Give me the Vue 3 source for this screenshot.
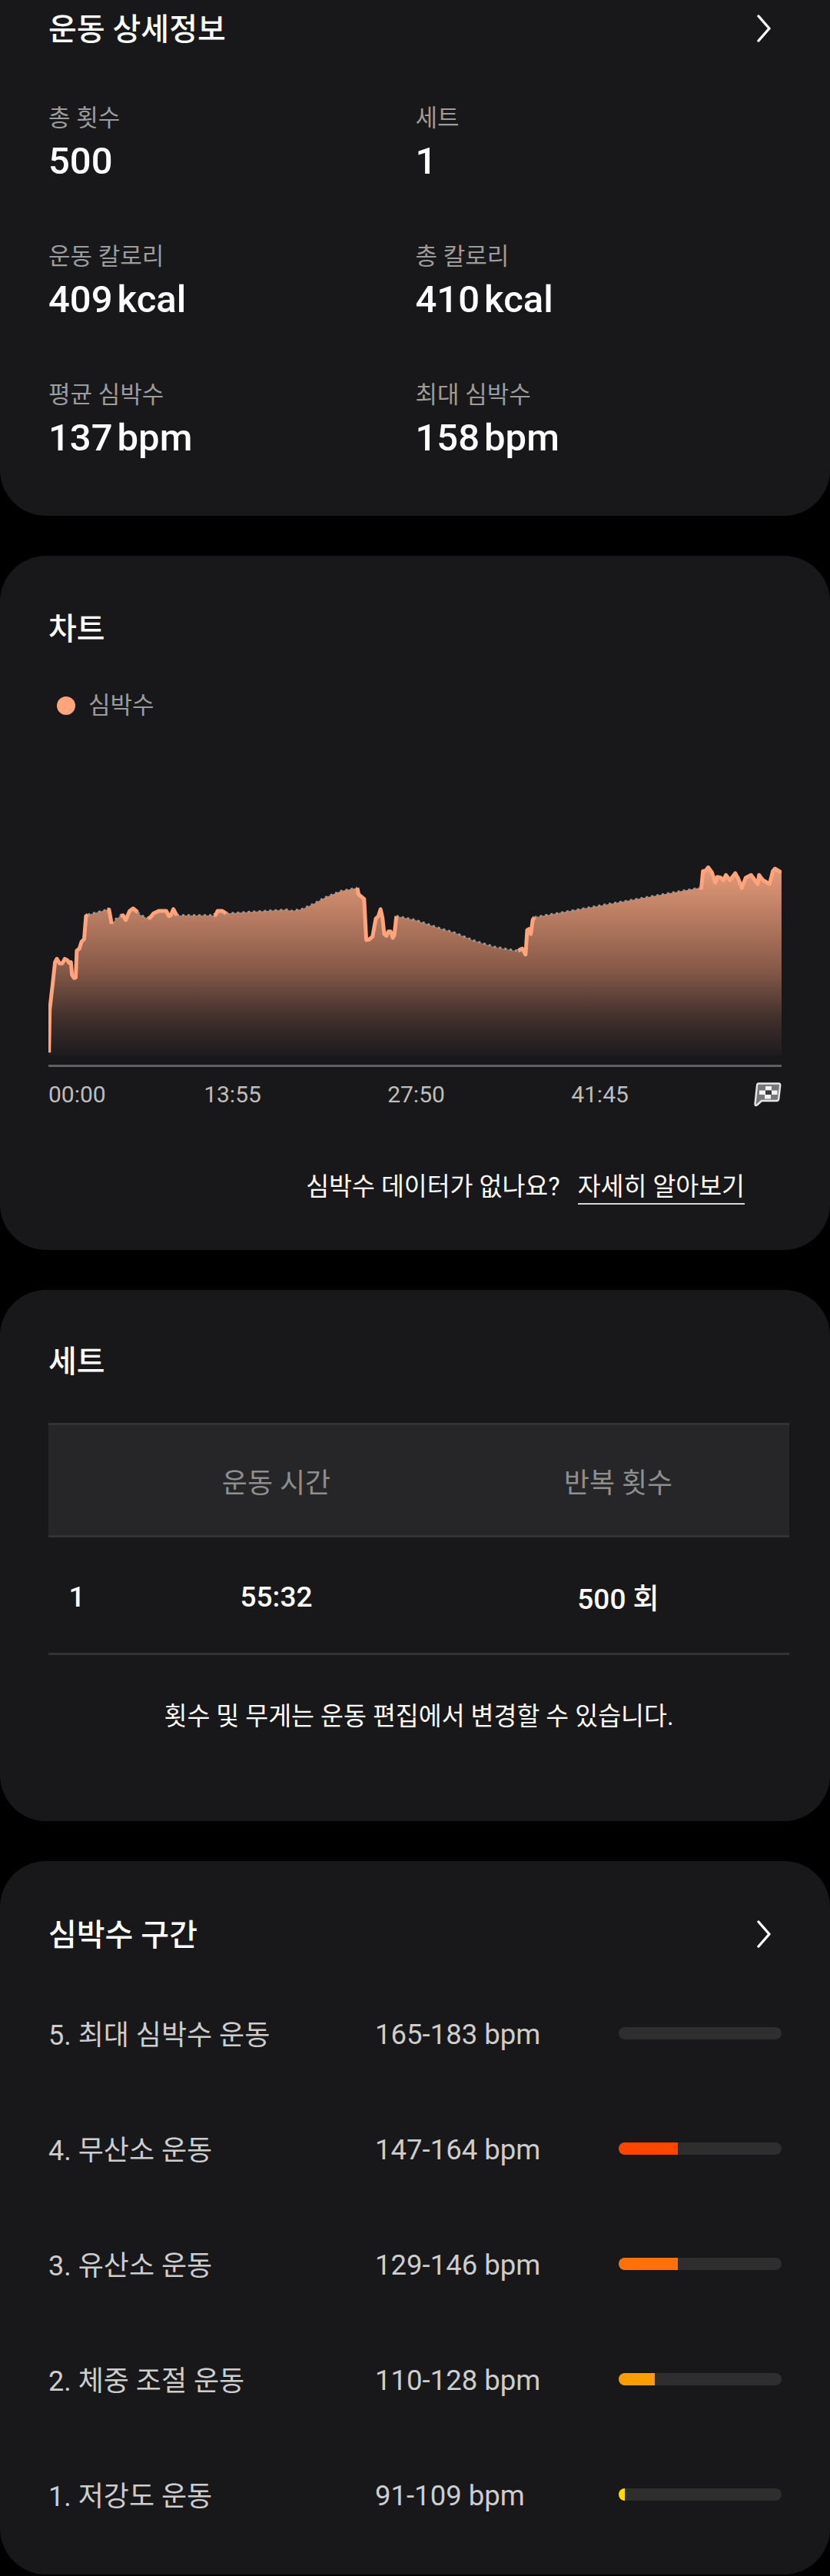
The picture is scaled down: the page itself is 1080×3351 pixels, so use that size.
<template>
  <main class="page">
    <section class="card card-detail">
      <div class="card-head">
        <h2>운동 상세정보</h2>
        <svg class="chevron" width="20" height="36" viewBox="0 0 20 36"><path d="M3 2 L17 18 L3 34" /></svg>
      </div>
      <div class="stats">
        <div v-for="s in stats" :key="s.label" class="stat">
          <div class="stat-label">{{ s.label }}</div>
          <div class="stat-value">{{ s.value }}<span v-if="s.unit" class="unit">{{ s.unit }}</span></div>
        </div>
      </div>
    </section>

    <section class="card card-chart">
      <div class="card-head"><h2>차트</h2></div>
      <div class="legend"><span class="dot"></span>심박수</div>
      <svg class="chart" width="954" height="290" viewBox="0 0 954 290">
        <defs>
          <linearGradient id="hrFill" gradientUnits="userSpaceOnUse" x1="0" y1="28" x2="0" y2="273">
            <stop offset="0" stop-color="#e69c79" />
            <stop offset="0.54" stop-color="#875a48" />
            <stop offset="0.8" stop-color="#41302c" />
            <stop offset="0.95" stop-color="#262021" />
            <stop offset="1" stop-color="#1d1b1d" />
          </linearGradient>
        </defs>
        <path :d="areaPath" fill="url(#hrFill)" />
        <path v-for="(d, i) in dottedPaths" :key="'d' + i" :d="d" class="dotted" />
        <path v-for="(d, i) in solidPaths" :key="'s' + i" :d="d" class="solid" />
        <rect x="0" y="285" width="954" height="3" fill="#5f5f60" />
      </svg>
      <div class="axis">
        <span v-for="t in ticks" :key="t" class="tick">{{ t }}</span>
        <svg class="flag" width="36" height="32" viewBox="0 0 36 32">
          <path d="M6 1.5 H32 Q34.5 1.5 34.2 4 L32.2 21.5 Q32 24 29.5 24 H10 L4 29.5 Q1.5 31 1.5 28 L4 4 Q4.2 1.5 6 1.5 Z" fill="#77777a" stroke="#e6e6e6" stroke-width="2.4" stroke-linejoin="round" />
          <rect x="15" y="5" width="8" height="5.5" fill="#f2f2f2" />
          <rect x="7" y="10.5" width="8" height="5.5" fill="#f2f2f2" />
          <rect x="15" y="10.5" width="8" height="5.5" fill="#3a3a3c" />
          <rect x="23" y="10.5" width="7.5" height="5.5" fill="#f2f2f2" />
          <rect x="14" y="16" width="8" height="5.5" fill="#f2f2f2" />
        </svg>
      </div>
      <p class="hr-note">심박수 데이터가 없나요?<a class="more">자세히 알아보기</a></p>
    </section>

    <section class="card card-sets">
      <div class="card-head"><h2>세트</h2></div>
      <div class="set-table">
        <div class="set-row set-header">
          <span></span>
          <span>운동 시간</span>
          <span>반복 횟수</span>
        </div>
        <div class="set-row set-body">
          <span>1</span>
          <span>55:32</span>
          <span>500 회</span>
        </div>
      </div>
      <p class="sets-note">횟수 및 무게는 운동 편집에서 변경할 수 있습니다.</p>
    </section>

    <section class="card card-zones">
      <div class="card-head">
        <h2>심박수 구간</h2>
        <svg class="chevron" width="20" height="36" viewBox="0 0 20 36"><path d="M3 2 L17 18 L3 34" /></svg>
      </div>
      <div v-for="z in zones" :key="z.name" class="zone">
        <span class="zone-name">{{ z.name }}</span>
        <span>{{ z.range }}</span>
        <div class="bar">
          <div class="bar-fill" :style="{ width: z.width + 'px', background: z.color }"></div>
        </div>
      </div>
    </section>
  </main>
</template>

<script setup>
const stats = [
  { label: '총 횟수', value: '500' },
  { label: '세트', value: '1' },
  { label: '운동 칼로리', value: '409', unit: 'kcal' },
  { label: '총 칼로리', value: '410', unit: 'kcal' },
  { label: '평균 심박수', value: '137', unit: 'bpm' },
  { label: '최대 심박수', value: '158', unit: 'bpm' }
]

const ticks = ['00:00', '13:55', '27:50', '41:45']

const zones = [
  { name: '5. 최대 심박수 운동', range: '165-183 bpm', width: 0, color: '#ff4500' },
  { name: '4. 무산소 운동', range: '147-164 bpm', width: 77, color: '#ff4500' },
  { name: '3. 유산소 운동', range: '129-146 bpm', width: 77, color: '#ff7008' },
  { name: '2. 체중 조절 운동', range: '110-128 bpm', width: 47, color: '#ff9c00' },
  { name: '1. 저강도 운동', range: '91-109 bpm', width: 8, color: '#ffdc00' }
]

// traced from the reference crops, converted to chart-local px
const L = (x, y) => [x / 2.904 - 63, 1060 + y / 3 - 1100]
const R = (x, y) => [540 + x / 2.904 - 63, 1060 + y / 3 - 1100]

const segments = [
  { solid: true, pts: [L(185, 928), L(188, 760), L(200, 650), L(208, 575), L(215, 562), L(225, 580), L(235, 580), L(245, 562), L(255, 568), L(262, 578), L(268, 575), L(272, 625), L(280, 637), L(286, 635), L(290, 530), L(300, 522), L(308, 495), L(318, 485), L(325, 395), L(332, 390)] },
  { pts: [L(332, 390), L(405, 370)] },
  { solid: true, pts: [L(405, 370), L(412, 370), L(422, 425)] },
  { pts: [L(422, 425), L(440, 405), L(455, 395)] },
  { solid: true, pts: [L(455, 395), L(465, 392), L(475, 410), L(490, 375), L(503, 365), L(520, 380)] },
  { pts: [L(520, 380), L(530, 390), L(560, 405)] },
  { solid: true, pts: [L(560, 405), L(568, 400), L(580, 385), L(600, 375), L(628, 375), L(638, 395), L(645, 392), L(655, 368), L(668, 392)] },
  { pts: [L(668, 392), L(808, 392)] },
  { solid: true, pts: [L(808, 392), L(815, 390), L(822, 375), L(840, 375), L(855, 385)] },
  { pts: [L(855, 385), L(1085, 370), L(1100, 375), L(1140, 368), L(1180, 350), L(1230, 322), L(1290, 297), L(1350, 285)] },
  { solid: true, pts: [L(1350, 285), L(1355, 310), L(1376, 328), L(1384, 488), L(1395, 486), L(1408, 475), L(1420, 405), L(1430, 395), L(1438, 368), L(1445, 400), L(1452, 465), L(1460, 472), L(1468, 455), L(1476, 455), L(1484, 480), L(1490, 470), L(1498, 395)] },
  { pts: [L(1498, 395), R(0, 410), R(100, 445), R(150, 460), R(220, 490), R(300, 515), R(390, 532)] },
  { solid: true, pts: [R(390, 532), R(398, 525), R(405, 522), R(418, 545), R(424, 450), R(432, 445), R(438, 465), R(445, 410), R(452, 400)] },
  { pts: [R(452, 400), R(1075, 285)] },
  { solid: true, pts: [R(1075, 285), R(1082, 285), R(1088, 220), R(1098, 218), R(1108, 205), R(1122, 225), R(1135, 265), R(1142, 242), R(1155, 245), R(1165, 255), R(1175, 235), R(1190, 255), R(1210, 228), R(1222, 250), R(1235, 285), R(1250, 245), R(1270, 235), R(1295, 270), R(1300, 235), R(1315, 255), R(1340, 270), R(1352, 220), R(1360, 210), R(1385, 225)] }
]

const toPath = pts => 'M' + pts.map(p => p[0].toFixed(1) + ' ' + p[1].toFixed(1)).join(' L')

const solidPaths = segments.filter(s => s.solid).map(s => toPath(s.pts))
const dottedPaths = segments.filter(s => !s.solid).map(s => toPath(s.pts))

const allPts = segments.flatMap(s => s.pts)
const areaPath = toPath(allPts) + ' L954 273 L0 273 Z'
</script>

<style>
html,
body {
  background: #000;
}
</style>

<style scoped>
.page {
  width: 1080px;
  height: 3351px;
  background: #000;
  font-family: Roboto, "Noto Sans CJK KR", sans-serif;
  color: #fff;
  overflow: hidden;
}

.card {
  background: #18181a;
  border-radius: 60px;
  padding: 0 63px;
  box-sizing: border-box;
}

.card-head {
  display: flex;
  align-items: center;
  justify-content: space-between;
  height: 74px;
}

.card-head h2 {
  margin: 3px 0 0;
  font-size: 40px;
  line-height: 74px;
  font-weight: 500;
}

.chevron {
  margin-right: 13px;
}

.chevron path {
  fill: none;
  stroke: #fff;
  stroke-width: 3.4;
  stroke-linecap: round;
  stroke-linejoin: round;
}

/* detail */
.card-detail {
  height: 671px;
  border-radius: 0 0 60px 60px;
}

.stats {
  display: grid;
  grid-template-columns: 477.5px 1fr;
  row-gap: 70px;
  margin-top: 58px;
}

.stat-label {
  font-size: 31px;
  line-height: 44px;
  color: #9c9c9c;
}

.stat-value {
  padding-top: 2px;
  font-size: 49px;
  line-height: 64px;
  font-weight: 500;
}

.unit {
  margin-left: 6px;
}

/* chart */
.card-chart {
  margin-top: 52px;
  height: 903px;
  padding-top: 57px;
}

.legend {
  display: flex;
  align-items: center;
  margin-top: 42px;
  padding-left: 11px;
  font-size: 31px;
  line-height: 44px;
  color: #9c9c9c;
}

.dot {
  width: 24px;
  height: 24px;
  border-radius: 50%;
  background: #ffa47c;
  margin-right: 17px;
}

.chart {
  display: block;
  margin-top: 160px;
}

.dotted {
  fill: none;
  stroke: #9a9a9a;
  stroke-width: 3;
  stroke-dasharray: 3 4;
}

.solid {
  fill: none;
  stroke: #ffa47c;
  stroke-width: 5;
  stroke-linejoin: round;
}

.axis {
  display: flex;
  align-items: center;
  height: 40px;
  margin-top: 14px;
  font-size: 30px;
  line-height: 40px;
  color: #bdbdbd;
}

/* first label sits flush left, the rest are centred on their ticks */
.tick {
  width: 239px;
  text-align: center;
}

.tick:first-child {
  width: 120px;
  text-align: left;
}

.flag {
  margin-left: auto;
}

.hr-note {
  margin: 79px 48px 0 0;
  text-align: right;
  font-size: 32.5px;
  line-height: 42px;
  white-space: nowrap;
}

.more {
  display: inline-block;
  margin-left: 23px;
  border-bottom: 2px solid #d8d8d8;
}

/* sets */
.card-sets {
  margin-top: 52px;
  height: 691px;
  padding-top: 55px;
}

.set-table {
  margin: 44px -10px 0 0;
}

.set-row {
  display: grid;
  grid-template-columns: 74px 445px 445px;
  align-items: center;
  text-align: center;
  box-sizing: border-box;
}

.set-header {
  height: 149px;
  background: #262628;
  border-top: 3px solid #333335;
  border-bottom: 3px solid #333335;
  font-size: 36px;
  color: #8e8e8e;
}

.set-body {
  height: 153px;
  padding-top: 4px;
  border-bottom: 3px solid #333335;
  font-size: 37px;
  font-weight: 500;
}

.sets-note {
  margin: 58px -10px 0 0;
  text-align: center;
  font-size: 32.5px;
  line-height: 44px;
  white-space: nowrap;
}

/* zones */
.card-zones {
  margin-top: 52px;
  height: 928px;
  padding-top: 58px;
}

.zone {
  display: grid;
  grid-template-columns: 425px 317px 212px;
  align-items: center;
  height: 150px;
  font-size: 36.5px;
  color: #cdcdcd;
  white-space: nowrap;
}

.zone-name {
  margin-top: -4px;
  font-size: 36px;
}

.card-zones .card-head {
  margin-bottom: 18px;
}

.bar {
  height: 16px;
  margin-top: -3px;
  border-radius: 8px;
  background: #2e2e2e;
  overflow: hidden;
}

.bar-fill {
  height: 100%;
}
</style>
